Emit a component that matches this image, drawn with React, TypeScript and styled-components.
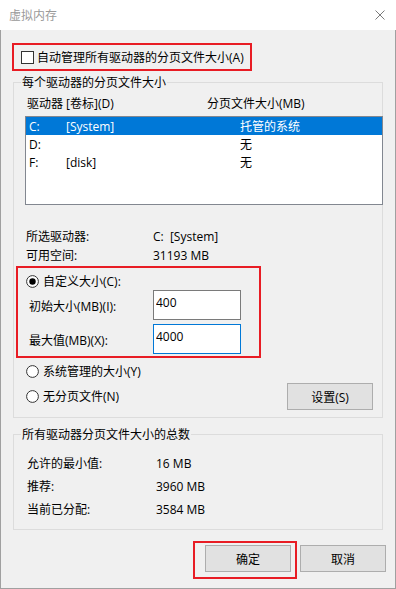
import * as React from "react";
import styled, { createGlobalStyle } from "styled-components";

const GlobalStyle = createGlobalStyle`
  html, body {
    margin: 0;
    padding: 0;
    background: #ffffff;
  }
  body {
    font-family: "Open Sans", "Noto Sans CJK SC", sans-serif;
    font-size: 12px;
    color: #000000;
  }
  * {
    box-sizing: border-box;
  }
`;

const RED = "#e81c24";

const Window = styled.div`
  width: 396px;
  height: 589px;
  display: flex;
  flex-direction: column;
  background: #ffffff;
`;

const TitleBar = styled.div`
  height: 30px;
  flex: none;
  display: flex;
  align-items: center;
  justify-content: space-between;
  padding: 0 11px 0 9px;
`;

const Title = styled.span`
  color: #9a9a9a;
  line-height: 17px;
`;

const Body = styled.div`
  flex: 1;
  background: #f0f0f0;
  border: 1px solid #a0a0a0;
  border-top: none;
  padding: 13px 9px 0 12px;
  display: flex;
  flex-direction: column;
`;

const Highlight = styled.div`
  border: 2px solid ${RED};
`;

const AutoBox = styled(Highlight)`
  width: 240px;
  height: 28px;
  margin-left: -1px;
  display: flex;
  align-items: center;
  gap: 3px;
  padding-left: 7px;
`;

const CheckBox = styled.span`
  width: 13px;
  height: 13px;
  border: 1px solid #333333;
  background: #ffffff;
  flex: none;
`;

const Label = styled.span`
  line-height: 17px;
  white-space: nowrap;
`;

const GroupBox = styled.div<{ $top: number }>`
  position: relative;
  width: 370px;
  margin-top: ${(p) => p.$top}px;
  border: 1px solid #dcdcdc;
  display: flex;
  flex-direction: column;
`;

const Legend = styled.span`
  position: absolute;
  top: -9px;
  left: 7px;
  padding: 0 1px;
  background: #f0f0f0;
  line-height: 17px;
  white-space: nowrap;
`;

const Header = styled.div`
  display: grid;
  grid-template-columns: 180px 1fr;
  padding-left: 13px;
  margin-top: 12px;
  line-height: 17px;
`;

const DriveList = styled.div`
  margin: 4px 0 0 11px;
  width: 358px;
  height: 89px;
  border: 1px solid #828790;
  background: #ffffff;
`;

const DriveRow = styled.div<{ $selected?: boolean }>`
  height: 18px;
  display: grid;
  grid-template-columns: 37px 174px 1fr;
  align-items: center;
  padding-left: 3px;
  line-height: 17px;
  background: ${(p) => (p.$selected ? "#0078d7" : "transparent")};
  color: ${(p) => (p.$selected ? "#ffffff" : "#000000")};
`;

const InfoList = styled.div<{ $top: number; $indent: number; $col: number; $row: number }>`
  margin-top: ${(p) => p.$top}px;
  padding-left: ${(p) => p.$indent}px;
  display: grid;
  grid-template-columns: ${(p) => p.$col}px 1fr;
  grid-auto-rows: ${(p) => p.$row}px;
  align-items: center;
  line-height: 17px;
`;

const CustomBox = styled(Highlight)`
  margin: 1px 0 0 2px;
  width: 245px;
  height: 92px;
  padding-top: 4px;
`;

const RadioRow = styled.label<{ $indent: number; $top?: number }>`
  height: 18px;
  display: flex;
  align-items: center;
  gap: 4px;
  padding-left: ${(p) => p.$indent}px;
  margin-top: ${(p) => p.$top ?? 0}px;
  line-height: 17px;
`;

const FieldRow = styled.div<{ $top?: number }>`
  height: 30px;
  display: grid;
  grid-template-columns: 135px 88px;
  align-items: center;
  margin-top: ${(p) => p.$top ?? 0}px;
`;

const FieldLabel = styled.span`
  padding: 3px 0 0 11px;
  line-height: 17px;
  white-space: nowrap;
`;

const SizeInput = styled.input<{ $focused?: boolean }>`
  width: 88px;
  height: 30px;
  border: 1px solid ${(p) => (p.$focused ? "#0078d7" : "#7a7a7a")};
  background: #ffffff;
  padding: 0 2px 6px;
  font: inherit;
  font-size: 12px;
  color: #000000;
  outline: none;
`;

const OptionRow = styled.div`
  height: 27px;
  margin-top: 3px;
  margin-bottom: 7px;
  padding: 0 9px 0 12px;
  display: flex;
  align-items: center;
  justify-content: space-between;
`;

const Button = styled.button<{ $top?: number }>`
  width: 86px;
  height: 27px;
  margin-top: ${(p) => p.$top ?? 0}px;
  border: 1px solid #adadad;
  background: #e1e1e1;
  font: inherit;
  font-size: 12px;
  color: #000000;
  padding: 0;
`;

const Footer = styled.div`
  margin-top: 11px;
  display: flex;
  justify-content: flex-end;
  align-items: flex-start;
  gap: 3px;
`;

const OkBox = styled(Highlight)`
  padding: 2px 4px 5px 10px;
`;

const CloseIcon = () => (
  <svg width="10" height="10" viewBox="0 0 10 10">
    <path d="M0.5 0.5 L9.5 9.5 M9.5 0.5 L0.5 9.5" stroke="#7a7a7a" strokeWidth="1" />
  </svg>
);

const Radio = ({ checked }: { checked?: boolean }) => (
  <svg width="13" height="13" viewBox="0 0 13 13" style={{ flex: "none" }}>
    <circle cx="6.5" cy="6.5" r="5.9" fill="#ffffff" stroke="#333333" strokeWidth="1" />
    {checked && <circle cx="6.5" cy="6.5" r="3.2" fill="#000000" />}
  </svg>
);

const drives = [
  { letter: "C:", label: "[System]", size: "托管的系统", selected: true },
  { letter: "D:", label: "", size: "无" },
  { letter: "F:", label: "[disk]", size: "无" },
];

const totals = [
  ["允许的最小值:", "16 MB"],
  ["推荐:", "3960 MB"],
  ["当前已分配:", "3584 MB"],
];

const App: React.FC = () => {
  return (
    <>
      <GlobalStyle />
      <Window>
        <TitleBar>
          <Title>虚拟内存</Title>
          <CloseIcon />
        </TitleBar>
        <Body>
          <AutoBox>
            <CheckBox />
            <Label>自动管理所有驱动器的分页文件大小(A)</Label>
          </AutoBox>

          <GroupBox $top={11}>
            <Legend>每个驱动器的分页文件大小</Legend>
            <Header>
              <span>驱动器 [卷标](D)</span>
              <span>分页文件大小(MB)</span>
            </Header>
            <DriveList>
              {drives.map((d) => (
                <DriveRow key={d.letter} $selected={d.selected}>
                  <span>{d.letter}</span>
                  <span>{d.label}</span>
                  <span>{d.size}</span>
                </DriveRow>
              ))}
            </DriveList>
            <InfoList $top={22} $indent={12} $col={127} $row={19}>
              <span>所选驱动器:</span>
              <span>C:&nbsp;&nbsp;[System]</span>
              <span>可用空间:</span>
              <span>31193 MB</span>
            </InfoList>
            <CustomBox>
              <RadioRow $indent={8}>
                <Radio checked />
                <span>自定义大小(C):</span>
              </RadioRow>
              <FieldRow>
                <FieldLabel>初始大小(MB)(I):</FieldLabel>
                <SizeInput readOnly defaultValue="400" />
              </FieldRow>
              <FieldRow $top={4}>
                <FieldLabel>最大值(MB)(X):</FieldLabel>
                <SizeInput readOnly defaultValue="4000" $focused />
              </FieldRow>
            </CustomBox>
            <RadioRow $indent={12} $top={4}>
              <Radio />
              <span>系统管理的大小(Y)</span>
            </RadioRow>
            <OptionRow>
              <RadioRow $indent={0}>
                <Radio />
                <span>无分页文件(N)</span>
              </RadioRow>
              <Button>设置(S)</Button>
            </OptionRow>
          </GroupBox>

          <GroupBox $top={16}>
            <Legend>所有驱动器分页文件大小的总数</Legend>
            <InfoList $top={17} $indent={13} $col={129} $row={23} style={{ marginBottom: 8 }}>
              {totals.map(([k, v]) => (
                <React.Fragment key={k}>
                  <span>{k}</span>
                  <span>{v}</span>
                </React.Fragment>
              ))}
            </InfoList>
          </GroupBox>

          <Footer>
            <OkBox>
              <Button>确定</Button>
            </OkBox>
            <Button $top={4}>取消</Button>
          </Footer>
        </Body>
      </Window>
    </>
  );
};

export default App;
